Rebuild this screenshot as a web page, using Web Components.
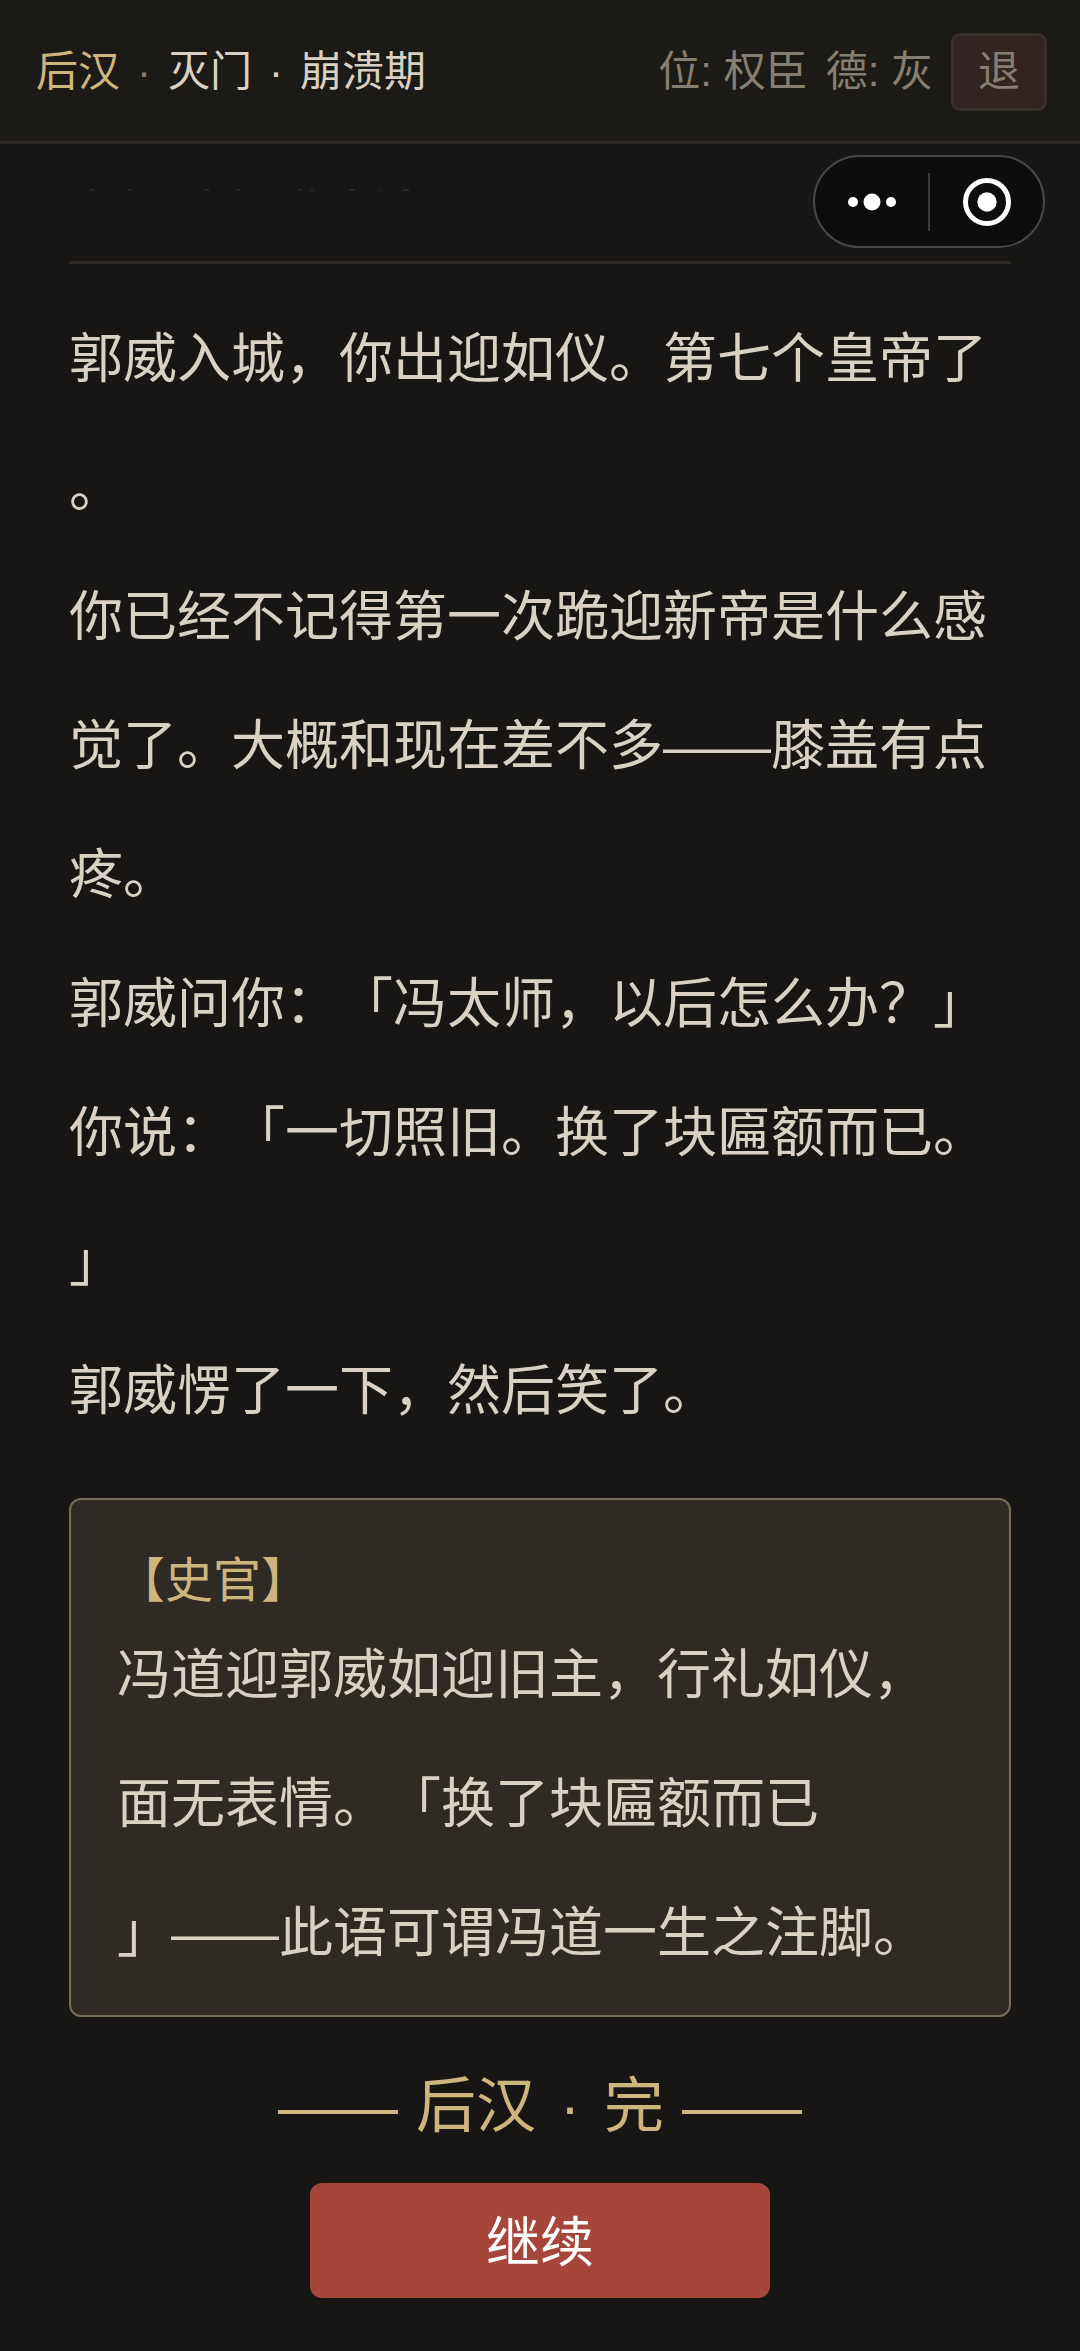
<!DOCTYPE html>
<html lang="zh-CN">
<head>
<meta charset="utf-8">
<meta name="viewport" content="width=device-width, initial-scale=1">
<title>后汉 · 灭门</title>
<style>
  :root {
    --bg: #171614;
    --bar: #1c1a16;
    --line: #2e2a25;
    --text: #d9d1c4;
    --muted: #857e72;
    --gold: #cdb67e;
    --red: #a64539;
  }
  body {
    margin: 0;
    background: var(--bg);
    color: var(--text);
    font-family: "Liberation Sans", "Noto Sans CJK SC", sans-serif;
    text-spacing-trim: space-all;
  }
</style>
</head>
<body>
<story-page>
  <top-bar slot="bar" dynasty="后汉" chapter="灭门" phase="崩溃期" rank="权臣" virtue="灰"></top-bar>
  <mini-capsule slot="capsule"></mini-capsule>
  <story-text>
    <p>郭威入城，你出迎如仪。第七个皇帝了。</p>
    <p>你已经不记得第一次跪迎新帝是什么感觉了。大概和现在差不多——膝盖有点疼。</p>
    <p>郭威问你：「冯太师，以后怎么办？」</p>
    <p>你说：「一切照旧。换了块匾额而已。」</p>
    <p>郭威愣了一下，然后笑了。</p>
  </story-text>
  <historian-note heading="【史官】">冯道迎郭威如迎旧主，行礼如仪，面无表情。「换了块匾额而已<span>」——</span>此语可谓冯道一生之注脚。</historian-note>
  <chapter-end dynasty="后汉"></chapter-end>
  <continue-button>继续</continue-button>
</story-page>

<script>
(() => {
  class BaseElement extends HTMLElement {
    constructor() {
      super();
      this.attachShadow({ mode: 'open' });
    }

    connectedCallback() {
      this.shadowRoot.innerHTML = this.render();
    }

    attr(name) {
      return this.getAttribute(name) ?? '';
    }
  }

  customElements.define('story-page', class extends BaseElement {
    render() {
      return `
        <style>
          :host { display: block; position: relative; min-height: 100vh; }
          main { display: flex; flex-direction: column; padding: 42px 69px 54px; }
          .faded { display: block; height: 6px; margin-bottom: 69px; fill: #2c2a28; }
          hr { width: 100%; height: 3px; margin: 0 0 31px; border: 0; background: var(--line); }
          /* floats over the scrolling story */
          .capsule { position: absolute; top: 155px; right: 35px; }
        </style>
        <slot name="bar"></slot>
        <div class="capsule"><slot name="capsule"></slot></div>
        <main>
          <!-- last trace of the line scrolled out above -->
          <svg class="faded" width="360" height="6" viewBox="0 0 360 6" aria-hidden="true">
            <ellipse cx="23" cy="4" rx="3" ry="1"/><ellipse cx="61" cy="4" rx="2" ry="1"/>
            <ellipse cx="138" cy="4" rx="3" ry="1"/><ellipse cx="169" cy="4" rx="2" ry="1"/>
            <ellipse cx="231" cy="4" rx="2" ry="1"/><ellipse cx="243" cy="4" rx="2" ry="1"/>
            <ellipse cx="283" cy="4" rx="3" ry="1"/><ellipse cx="312" cy="4" rx="1" ry="1"/>
            <ellipse cx="337" cy="4" rx="4" ry="1"/>
          </svg>
          <hr>
          <slot></slot>
        </main>
      `;
    }
  });

  customElements.define('top-bar', class extends BaseElement {
    render() {
      return `
        <style>
          :host { display: block; background: var(--bar); border-bottom: 3px solid var(--line); }
          header {
            display: flex; align-items: center; justify-content: space-between;
            padding: 33px 33px 30px 36px; font-size: 42px; line-height: 60px;
          }
          .title, .stats { display: flex; align-items: center; }
          .title { gap: 17px; }
          .dynasty { color: var(--gold); }
          .dot, .stats { color: var(--muted); }
          .stats { gap: 18px; }
          button {
            padding: 6px 24px; border: 3px solid #3a302b; border-radius: 9px;
            background: #322421; color: inherit; font: inherit;
          }
        </style>
        <header>
          <div class="title">
            <span class="dynasty">${this.attr('dynasty')}</span>
            <span class="dot">·</span>
            <span>${this.attr('chapter')}</span>
            <span>·</span>
            <span>${this.attr('phase')}</span>
          </div>
          <div class="stats">
            <span>位: ${this.attr('rank')}</span>
            <span>德: ${this.attr('virtue')}</span>
            <button type="button">退</button>
          </div>
        </header>
      `;
    }
  });

  customElements.define('mini-capsule', class extends BaseElement {
    render() {
      return `
        <style>
          :host {
            display: flex; align-items: center; box-sizing: border-box;
            width: 232px; height: 93px;
            border: 2px solid #474645; border-radius: 48px; background: #0e0d0b;
          }
          button {
            flex: 1; display: flex; justify-content: center;
            padding: 0; border: 0; background: none; color: #fff;
          }
          svg { display: block; fill: currentColor; }
          i { width: 2px; height: 58px; background: #3c3b3a; }
        </style>
        <button type="button" aria-label="更多">
          <svg width="50" height="50" viewBox="0 0 50 50">
            <circle cx="6" cy="25" r="5"/><circle cx="25" cy="25" r="8.5"/><circle cx="44" cy="25" r="5"/>
          </svg>
        </button>
        <i></i>
        <button type="button" aria-label="关闭">
          <svg width="50" height="50" viewBox="0 0 50 50">
            <circle cx="25" cy="25" r="21.5" fill="none" stroke="currentColor" stroke-width="5"/>
            <circle cx="25" cy="25" r="9.7"/>
          </svg>
        </button>
      `;
    }
  });

  customElements.define('story-text', class extends BaseElement {
    render() {
      return `
        <style>
          :host { display: block; font-size: 54px; line-height: 129px; line-break: anywhere; }
          ::slotted(p) { margin: 0; }
        </style>
        <slot></slot>
      `;
    }
  });

  customElements.define('historian-note', class extends BaseElement {
    render() {
      return `
        <style>
          :host {
            display: block; margin-top: 42px; padding: 51px 46px 17px;
            border: 2px solid #766c58; border-radius: 12px; background: #2f2a23;
          }
          h2 { margin: 0; color: var(--gold); font-size: 48px; font-weight: 400; line-height: 60px; }
          p { margin: 0; font-size: 54px; line-height: 129px; line-break: anywhere; }
          /* closing quote stays with its dash */
          ::slotted(span) { white-space: nowrap; }
        </style>
        <h2>${this.attr('heading')}</h2>
        <p><slot></slot></p>
      `;
    }
  });

  customElements.define('chapter-end', class extends BaseElement {
    render() {
      return `
        <style>
          :host {
            display: flex; justify-content: center; gap: 18px; margin-top: 45px;
            color: var(--gold); font-size: 60px; line-height: 90px;
          }
          .name { display: flex; gap: 24px; }
        </style>
        <span>——</span>
        <span class="name"><span>${this.attr('dynasty')}</span><span>·</span><span>完</span></span>
        <span>——</span>
      `;
    }
  });

  customElements.define('continue-button', class extends BaseElement {
    render() {
      return `
        <style>
          :host { display: flex; justify-content: center; margin-top: 31px; }
          button {
            min-width: 460px; padding: 21px 48px 16px; border: 0; border-radius: 12px;
            background: var(--red); color: #fff; font: inherit; font-size: 54px; line-height: 78px;
          }
        </style>
        <button type="button"><slot></slot></button>
      `;
    }
  });
})();
</script>
</body>
</html>
